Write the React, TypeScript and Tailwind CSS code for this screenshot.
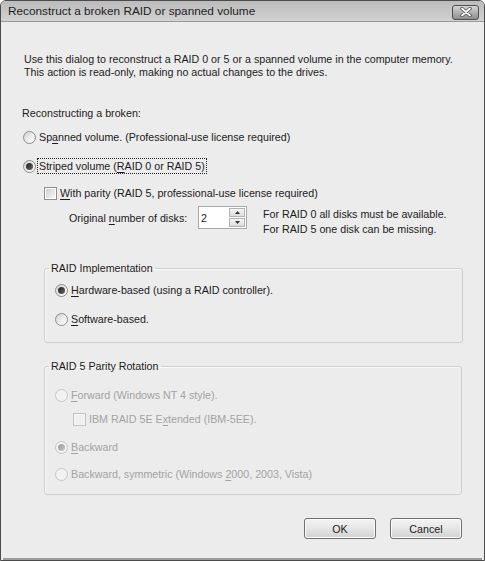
import React from 'react'

const font = { fontFamily: '"Liberation Sans", Arial, sans-serif' }

function Radio({ checked = false, disabled = false }: { checked?: boolean; disabled?: boolean }) {
  return (
    <span
      className={`flex-shrink-0 w-[13px] h-[13px] rounded-full border flex items-center justify-center ${
        disabled ? 'border-[#c6c6c6] bg-[#f2f2f2]' : 'border-[#8c8c8c] bg-gradient-to-br from-[#cfcfcf] via-[#ececec] to-white'
      }`}
    >
      {checked && (
        <span
          className={`w-[7px] h-[7px] rounded-full ${
            disabled ? 'bg-gradient-to-br from-[#9a9a9a] to-[#c8c8c8]' : 'bg-gradient-to-br from-[#1e1e1e] to-[#6a6a6a]'
          }`}
        />
      )}
    </span>
  )
}

function Checkbox({ disabled = false }: { disabled?: boolean }) {
  return (
    <span
      className={`flex-shrink-0 w-[13px] h-[13px] border flex items-center justify-center ${
        disabled ? 'border-[#c2c2c2] bg-[#f4f4f4]' : 'border-[#8e8e8e] bg-white'
      }`}
    >
      <span
        className={`w-[9px] h-[9px] ${
          disabled ? 'bg-[#f0f0f0]' : 'bg-gradient-to-br from-[#d0d0d0] to-[#f6f6f6]'
        }`}
      />
    </span>
  )
}

function Key({ children }: { children: React.ReactNode }) {
  return <span className="underline underline-offset-2">{children}</span>
}

const btn =
  'w-[72px] h-[21px] rounded-[3px] border border-[#707070] bg-gradient-to-b from-[#f4f4f4] via-[#e6e6e6] to-[#d2d2d2] text-[10.7px] text-[#1b1b1b] shadow-[inset_0_0_0_1px_#fbfbfb]'

export default function App() {
  return (
    <div style={font} className="w-[485px] h-[561px] bg-[#ececec] text-[#1b1b1b] text-[10.7px] leading-[16px] flex flex-col border border-[#4b4b4b] rounded-t-[6px] overflow-hidden">
      <div className="h-[21px] flex-shrink-0 flex items-center justify-between pl-[7px] pr-[5px] bg-gradient-to-b from-[#bcbcbc] to-[#d2d2d2] border-b border-[#9a9a9a]">
        <span className="text-[11.8px] text-[#1e1e1e]">Reconstruct a broken RAID or spanned volume</span>
        <span className="w-[27px] h-[15px] mt-[2px] rounded-[3px] border border-[#4e4e4e] bg-gradient-to-b from-[#d6d6d6] to-[#8e8e8e] flex items-center justify-center">
          <svg width="12" height="10" viewBox="0 0 12 10">
            <path d="M2 1.5 L10 8.5 M10 1.5 L2 8.5" stroke="#4a4a4a" strokeWidth="3.4" strokeLinecap="round" />
            <path d="M2 1.5 L10 8.5 M10 1.5 L2 8.5" stroke="#ffffff" strokeWidth="1.8" strokeLinecap="round" />
          </svg>
        </span>
      </div>

      <div className="flex-1 flex flex-col pl-[19px] pr-[20px] mx-[2px] border-b-[2px] border-[#9d9d9d]">
        <p className="mt-[31px] ml-[2px] leading-[13px] whitespace-nowrap">
          Use this dialog to reconstruct a RAID 0 or 5 or a spanned volume in the computer memory.
          <br />
          This action is read-only, making no actual changes to the drives.
        </p>

        <div className="mt-[26px] h-[16px]">Reconstructing a broken:</div>

        <div className="mt-[8px] h-[16px] flex items-center gap-[3px] ml-[1px]">
          <Radio />
          <span>Sp<Key>a</Key>nned volume. (Professional-use license required)</span>
        </div>

        <div className="mt-[13px] h-[16px] flex items-center gap-[2px] ml-[1px]">
          <Radio checked />
          <span className="outline outline-1 outline-dotted outline-[#222] px-[1px] leading-[14px]">
            Striped volume (<Key>R</Key>AID 0 or RAID 5)
          </span>
        </div>

        <div className="mt-[11px] h-[16px] flex items-center gap-[3px] ml-[22px]">
          <Checkbox />
          <span><Key>W</Key>ith parity (RAID 5, professional-use license required)</span>
        </div>

        <div className="mt-[5px] flex items-start ml-[47px]">
          <div className="h-[23px] flex items-center w-[129px]">
            <span>Original <Key>n</Key>umber of disks:</span>
          </div>
          <div className="h-[23px] w-[49px] border border-[#a9a9a9] bg-white flex items-center justify-between pl-[2px] pr-[1px]">
            <span>2</span>
            <div className="w-[16px] h-[19px] flex flex-col gap-[1px]">
              <span className="flex-1 border border-[#b3b3b3] bg-gradient-to-b from-[#f6f6f6] to-[#dcdcdc] flex items-center justify-center">
                <svg width="5" height="3" viewBox="0 0 5 3"><path d="M2.5 0 L5 3 L0 3 Z" fill="#333" /></svg>
              </span>
              <span className="flex-1 border border-[#b3b3b3] bg-gradient-to-b from-[#f6f6f6] to-[#dcdcdc] flex items-center justify-center">
                <svg width="5" height="3" viewBox="0 0 5 3"><path d="M0 0 L5 0 L2.5 3 Z" fill="#333" /></svg>
              </span>
            </div>
          </div>
          <div className="ml-[16px] leading-[15px] pt-[1px]">
            For RAID 0 all disks must be available.
            <br />
            For RAID 5 one disk can be missing.
          </div>
        </div>

        <fieldset className="mt-[23px] ml-[22px] w-[419px] border border-[#cfcfcf] rounded-[3px] pl-[10px] pb-[15px] shadow-[inset_1px_1px_0_#fafafa]">
          <legend className="-ml-[6px] px-[2px] h-[16px]">RAID Implementation</legend>
          <div className="mt-[6px] h-[16px] flex items-center gap-[3px]">
            <Radio checked />
            <span><Key>H</Key>ardware-based (using a RAID controller).</span>
          </div>
          <div className="mt-[13px] h-[16px] flex items-center gap-[3px]">
            <Radio />
            <span><Key>S</Key>oftware-based.</span>
          </div>
        </fieldset>

        <fieldset className="mt-[15px] ml-[22px] w-[418px] border border-[#cfcfcf] rounded-[3px] pl-[10px] pb-[12px] shadow-[inset_1px_1px_0_#fafafa]">
          <legend className="-ml-[6px] px-[2px] h-[16px]">RAID 5 Parity Rotation</legend>
          <div className="mt-[13px] h-[16px] flex items-center gap-[3px] text-[#a3a3a3]">
            <Radio disabled />
            <span><Key>F</Key>orward (Windows NT 4 style).</span>
          </div>
          <div className="mt-[8px] h-[16px] flex items-center gap-[3px] ml-[18px] text-[#a3a3a3]">
            <Checkbox disabled />
            <span>IBM RAID 5E E<Key>x</Key>tended (IBM-5EE).</span>
          </div>
          <div className="mt-[12px] h-[16px] flex items-center gap-[3px] text-[#a3a3a3]">
            <Radio checked disabled />
            <span><Key>B</Key>ackward</span>
          </div>
          <div className="mt-[11px] h-[16px] flex items-center gap-[3px] text-[#a3a3a3]">
            <Radio disabled />
            <span>Backward, symmetric (Windows <Key>2</Key>000, 2003, Vista)</span>
          </div>
        </fieldset>

        <div className="mt-[23px] flex justify-end gap-[14px]">
          <button className={btn}>OK</button>
          <button className={btn}>Cancel</button>
        </div>
      </div>
    </div>
  )
}
